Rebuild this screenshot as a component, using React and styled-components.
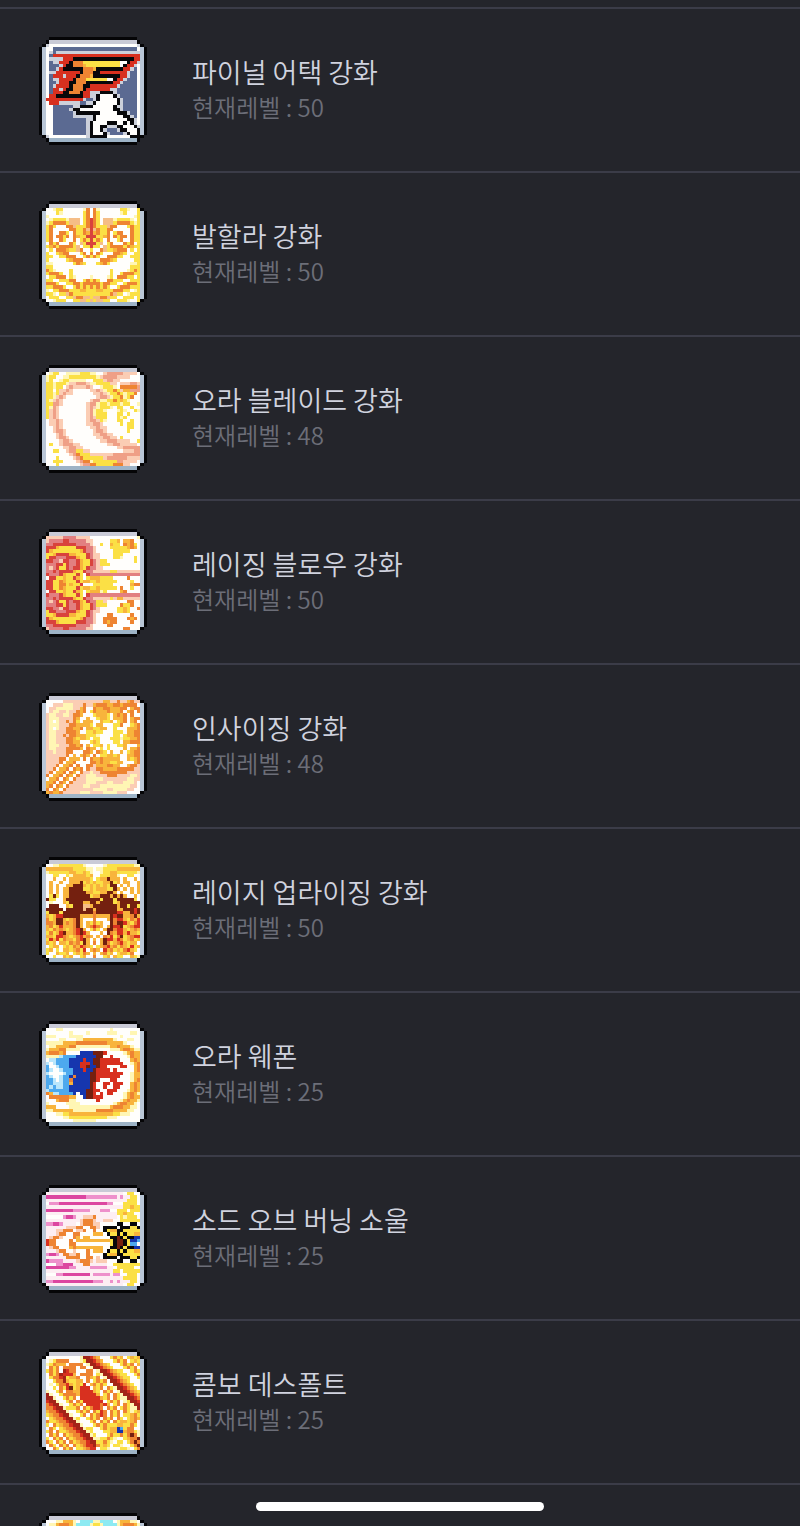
import styled, { createGlobalStyle } from 'styled-components';

const GlobalStyle = createGlobalStyle`
    * {
        box-sizing: border-box;
    }

    body {
        margin: 0;
        background-color: #24252b;
        font-family: "Noto Sans CJK KR", "Noto Sans", sans-serif;
    }
`

const Screen = styled.main`
    height: 100vh;
    overflow: hidden;
    padding-top: 7px;
`;

const SkillList = styled.ul`
    list-style: none;
    margin: 0;
    padding: 0;
`;

const SkillRow = styled.li`
    display: flex;
    align-items: center;
    gap: 45px;
    padding: 28px 39px 26px;
    border-top: 2px solid #3b3c48;
`;

const Icon = styled.svg`
    flex: none;
    width: 108px;
    height: 108px;
    shape-rendering: crispEdges;
`;

const SkillInfo = styled.div`
    min-width: 0;
    padding-bottom: 4px;
`;

const SkillName = styled.h2`
    margin: 0;
    color: #d0d3df;
    font-size: 27px;
    font-weight: 350;
    line-height: 36px;
`;

const SkillLevel = styled.p`
    margin: 0;
    color: #6c6e78;
    font-size: 24px;
    font-weight: 350;
    line-height: 34px;
`;

const HomeIndicator = styled.div`
    position: fixed;
    left: 50%;
    bottom: 15px;
    width: 36%;
    height: 9px;
    border-radius: 5px;
    background-color: #fff;
    transform: translateX(-50%);
`;

const PALETTE = {
    w: '#fffefc', k: '#08080a', s: '#5b6a92', g: '#ccd0da',
    r: '#d8301f', d: '#74200f', D: '#a32418', R: '#d9433c',
    o: '#ee8432', a: '#f8b43c', y: '#fbe045', l: '#fff6b4',
    n: '#f5bd86', p: '#fbcdb4', q: '#ef9f86', m: '#e27f80',
    b: '#4da9ee', B: '#1636ae', c: '#b9e6fb', C: '#8deaf2',
    M: '#dc46a0', P: '#ee90cb', f: '#fdeef3',
}

// 28x28 sprites, one letter per pixel
const finalAttack = [
    'gwwwwwwwwwwwwwwwwwwwwwwwwwwg',
    'wwsssssssssssssssssssssssssw',
    'wgsggggggggggggggggggggggggg',
    'wsrrrrrrrrrrrrrrrrrrrrrrrrrr',
    'wggggrrrkkkkkkkkkkkkkkkkkkrr',
    'wsggrrrkoooyyyyyyyyyyywwkrrg',
    'wsssgrkkoooayyyyyyyyyywkrrgw',
    'wssgrkkkkkkoooakkkkkkkkrrgsw',
    'wggrrrrrrrkoookkrrrrrrrrgssw',
    'wsrrrgrrrkoooakkkkkkkkrrgssw',
    'wsggrrrrkoooyyyyyywwkrrgsssw',
    'wssgrrrkkoookkkkkkkkrrgssssw',
    'wsgrrrrkoookkrrrrrrrrgsssssw',
    'wsrrgrkkoookrrrrrrrggssssssw',
    'wsrrrkkoookrrgggkkkkgssssssw',
    'wrrkkkkkkkkrrggkwwwwkgsssssw',
    'rrrrrrrrrrrgssgkwwwwwkgssssw',
    'wrrrggggggssggkwwwwwwkgssssw',
    'wwssssssggkkkkwwwwwwkggssssw',
    'wwsssssgkkwwwwwwwwwwkkgssssw',
    'wwssssssgkkkkkkkwwwwwkkkgssw',
    'wwssssssggggggkwwwwwwwwkkgsw',
    'wwssssssssssggkwwwwwwwwwkkgw',
    'wwssssssssssgkwwwwkkkwwkwkgw',
    'wwssssssssssgkwwkkgggkkwwwkg',
    'wwssssssssssgkwwkgsssgkkwwwk',
    'wwssssssssssgkwwwkgssssgkwwk',
    'gwwwwwwwwwwwgkkkkkwwwwwwwkkk',
]

// left half plus the centre column, mirrored below
const valhalla = [
    'wwlyywwwwwwlow', 'wwwylwwwwwwyow', 'lwwwwwwwwwwyow', 'wlyyyylnnnwyoR',
    'lyooooynnnwyoR', 'yoywwwoonyyyoR', 'yowwwwwooyyonR', 'yowwooywoyyoaR',
    'yowooyowoayyRR', 'yowwoywwowyoyR', 'woyowwwoywnyRR', 'yaoyooooynwyyR',
    'wywoooayynowwy', 'ywwyaoowwwyowo', 'yywwyyooowwyoy', 'ywwwwwyaooowww',
    'llwwwwwwyoayww', 'yywwwwwwwwwwww', 'oylwwwwywwwwww', 'yoooywwywwwwww',
    'wyyooowylwwwwl', 'yywwyyyoowwyoy', 'oooywwyyooyooo', 'yyoooywwyoyoyo',
    'lwyyoooyyyaayy', 'yylwyynoyyyyyy', 'wyyywwyynoonny', 'wwlyyywwyynnyn',
].map((half) => half + [...half.slice(0, 13)].reverse().join('') + 'y')

const auraBlade = [
    'wlyywwllllyyyllwwpqqqqqppppw',
    'lyywwllyyyyyyyylpqqqqppppwww',
    'lywwlyylllllwwyyypqqppwwwwww',
    'yylyyylppqqqpllyyyyppwpppqqp',
    'yylyywpqppppqpwwlyyylwoooooq',
    'yywyppqpwwwwwppqplyyoypaaqqq',
    'yylypqppwwwwwwppqplyyoylyyow',
    'yylpqpwwwwwwwwwpqqplyyolyoww',
    'ylpqpwwwwwwwwpqqllyyoyaylwww',
    'yyqqpwwwwwwwpqqlyylyyylyywwl',
    'ylqpwwwwwwwwpqplyyylwyywwyww',
    'ypqpwwwwwwwwpqlyylwwwlylwwyl',
    'ypqpwwwwwwwwpqlyyywwwyywywww',
    'ypqpwwwwwwwwpqpyyywwwylywwww',
    'wppqpwwwwwwwpqqpylwwwyywwyww',
    'wppqpwwwwwwwppqqpwwwwwywyyww',
    'wwpqpwwwwwwwwppqppwwwwwwyyww',
    'wwpqqpwwwwwwwwpqqpwwwwwwywww',
    'wwwpqpwwwwwwwwppqqppwwwwwwww',
    'wwwpqqpwwwwwwwwppqqppwywwwww',
    'wwwwpqqpwwwwwwwwppqqqppppwwy',
    'wywwpqqqppwwwwwwwwppqqpppppw',
    'wwwwwppqqppwwwwwwwwwwppqqqqq',
    'wwyywwpqqyyppwwwwwwwwwwpppqq',
    'wwwwwwwpqoyyypppppppqqqqqqqq',
    'wwwywwwwpqoyyyyyypqqqqqqpppp',
    'wwyyywwwwpqoolyyyyyyyqqppppw',
    'wwwywwwwwwpqqooyyyyyoooppwww',
]

const ragingBlow = [
    'pppppmmmmppppwwwwwwwwwwwwwwl',
    'pmmmmRRmmmmmppwwwwwyyawaaoww',
    'mmRRRRRRRmmmmpwwywwayywoaoyw',
    'RRRayyyyyRRRmmpwwwwyyyyyaoaw',
    'RayyyyyyyyaRmmpwwwwwyyyyywww',
    'yyaRRRRaayyyRmppwwwwyyywwwww',
    'yRRmmmRRRayyRmppwwwwyylwwwyw',
    'RRmmpRRmmRayyRmpyywwwwwwwwyw',
    'mmmRRyRmmRayyRmpyyywwwwwwwww',
    'mpmRyyRmRRayRmmppwwwwwwwwwww',
    'mmRmRRRRayyRmmpppppyyppppppp',
    'RmmmRayyyRywRmmmmmmmmmmmmmmm',
    'wRRyyayyRaywyaaayyyywwwwowww',
    'RRyyoayyyRyaayyayyyyywwwwyww',
    'RRyyooyayyRwwwyyyyyywwwwwaoo',
    'RRyyoayyyRyaayyayyyyywowwyww',
    'wRRyyayyRaywyaaalywwwwaowwww',
    'RmmmRayyyRywRmmmmmmmmmmmmmmm',
    'mmRmRRRRayyRmmpppppypaappppp',
    'mpmRyyRmRRayRmmyypwwwwwwooww',
    'mmmRRyRmmRayyRmyyywwwwoyyoww',
    'RRmmpRRmmRayyRmpwwwwwyyaywwo',
    'yRRmmmRRRayyRmppwwwwwyyaywww',
    'yyaRRRRaayyyRmpwwwoowwwwwoww',
    'RayyyyyyyyaRmmpwwoooowwwoaow',
    'RRRayyyyyRRRmmpwwoaoowwwwoww',
    'mmRRRRRRRmmmmpwwwwoowwwwwwww',
    'pmmmmRRmmmmmppwwwwwwwwwoowww',
]

const incising = [
    'wwwwwppppppppppppaappoppaopp',
    'wwppplllpppoppaoooaaooaoooow',
    'wpplllllppaowwoaaooaaaoowaoo',
    'wpllpplppoaowyoaaaoaaaowaowo',
    'pllppllpooawwwyaaaywaoaowoww',
    'plllppppoawwawwyaaywaaaowaoo',
    'plwlppopoywaaawwayyawyaowaow',
    'plllpppooaaaaywaawwwyyowwyao',
    'plwlppooaaowaayyaawwywwwaaao',
    'pllpppoooawwyyayywwwyyywaaoo',
    'pllppopooaaayyylwwwwyywyaaoo',
    'pllpppooayaaywyywwwyyylyyaao',
    'pllpppooaawwwyaywwwwyywaaooo',
    'plllpppooaowawyyawywwyyawwwa',
    'pllpppooooawoaawywywwwwawaao',
    'pplpppoowwwooawoaywawwawyaoo',
    'ppppppowawaoawowyyaayawwaaoo',
    'ppppoowaaawowoaaoaaaaawwayao',
    'ppppowaaowwwwooaoaayyaawwwao',
    'pppowaaowowwoopaaaooaawwaoop',
    'ppowaaowoaowoppooaaaaooooopp',
    'powaaowoawopplppoooooooopppp',
    'owaaowoawopplllpppoooppppllp',
    'waaowoawoppplllllpppppppllpp',
    'aaowoawopppplllpppllppplllpw',
    'aowoawoppppllppplllllllllppw',
    'owoawoppppppppllllppllllppww',
    'aoaaoppppplllppppllllpppwwww',
]

const rageUprising = [
    'wwllyyyyyyylwwwwwlyyyyyyyyll',
    'aaaaaaaayyyyllwllyyyyaaaaaaa',
    'lyyyyyyaayyaylwwlyyaayyyyyyl',
    'wwyywwylaaaayawwyyyaalwwyyww',
    'wwawwawaaaaaaywyaadaaawawwaw',
    'wawwawwaaadyayayyaadyawaawwa',
    'wawawwaadddayayayayddwawawwa',
    'wawawaaddddyyayaaayydawawawa',
    'wawawaadddddaayyaaddawawwawa',
    'wydywaaddddddyaadddadadawwaw',
    'dyywwaddddddddddydddydddddyw',
    'wlwwwayddddaaddaddddyadddddd',
    'wdddwwaydddnnadddddddaddyddy',
    'dddddwdddddnddaddddddaadddrd',
    'ydddydddddddddoddddddrraadrd',
    'ayarrdddddaaaaoaaaadrddaaoda',
    'oyaddayaodawwwowwwadorrayoar',
    'ooaddaoaodawayoyawwdoddrayor',
    'aoyaraaaodawaoroawadrrdyaorr',
    'ayoaoayaordawyoywaddorrayaoa',
    'yoyardaaordrawwwawdoarraraay',
    'aayrroayaoraoawawoaryodyaorr',
    'yraryoaayordawawadrraroyaoya',
    'ayawaayoaoydawowadoyaorayaaw',
    'wyaawyayoaroaywyaoraoyoayrya',
    'yawywaayaoyrwaoawraoyayorayw',
    'ywwayyawyayoawawaoyawyaayoww',
    'wwywwayawwyawwowwyawayywwayl',
]

const auraWeapon = [
    'wwwllwwwwwwwwwwwwwwlwwwwwwww',
    'wwwwwwwlwwwwlwwwwwlllwwwwllw',
    'lllwwwwllllwwwwwwwwwwwlwwwww',
    'wwwwllwwwllaaaaaaaaalwwwllww',
    'lllllaaaaoooooooooaaaaalwwww',
    'wllaaaaoollllllllllaaoaaalww',
    'laaaoollllwwwwwwwwwlllaooall',
    'aoooaowwwwBBBBdddrwwwwwlaoaa',
    'llllcbbbbBBBBBBddwwrwwwwloaa',
    'wccbbbbBBBBrBBddrrrrrrwwwaoa',
    'cwcbbbbBBBrrrBddrrrrrrrwwlao',
    'bwwcbbbBBBrrdBBdrrwwwwrrwwao',
    'bcwwcbbbBBBrBBdrrrrwrwwwwwao',
    'cwwwwcbbBBBBBddrrrrrrrrwwlaa',
    'bcwwcbbBoBBBBddrrrrrrrwwwlaa',
    'bbcwcbboBBBBBddrwwwrrwwwwlao',
    'bbcccbbaBBBBBdrwwrrwrrrwwaoa',
    'bcbccbbBBBBBBdrwwrwwrrwwwaoa',
    'cbbbbbbBBBBBddrrwwrrrwwwlaoa',
    'oaccbbbbBwBBddrwrwrrwwwlaoal',
    'wooooooaawwBddrrrwwwwwwlaoaa',
    'wwwaooollwwwwwwrwwwwwwlaoaal',
    'lwwwwwllllwwwwwwwwwwlaooaalw',
    'aaawwwwllllllllllllaoooaallw',
    'llaaaaaallllllloooooaaaallww',
    'wwwllyyaaaaaaaaaaaaayylllwww',
    'wwwwwllyyyyyyyyyyylllwwwwwww',
    'wwwwwwwwlllllllwwwwwwwwwwwww',
]

const burningSoul = [
    'fffffffffffffffffffffffwyyww',
    'MMMMMMMMMMMMPPPPPPPPPfPffyyw',
    'ffffffffffffffffffffffffyyyw',
    'wPPPMMMMMMMMMMMMMMPPwwwyyyyw',
    'fffffffffffffffffffffffyyayy',
    'MMMMMMMMPPPPPfffPPPwwyyywyyy',
    'fffffffffffffffffffffyyayyww',
    'wwwwwPMMPffpppoffffffwylyyyw',
    'ffffffffffpooopffpppwwyyyyyy',
    'PPMMPffffwpoooppwwwwwkkwwkkw',
    'ffffffpppoowwoopwkkkkwkkkyyk',
    'fffppooowppowwowwkyaakkyyyyy',
    'fffpoowwoowwwwaaawkyykykyyaa',
    'fpoopwwwoawaawwwwwwkkdkykkBB',
    'roowwwwowaaaaaaaaaaykddkyBBb',
    'roowwwwoowwwwwwwwwwykddkybbw',
    'fpoowwwaoaaaaaaaawwkkdkykkBB',
    'fffpoowwpwwwowaaawkyykykyyaa',
    'PMMPfooppowwowwwwkyaakkyyyyy',
    'ffffffoooowwoowpwkkkkwkkkyyk',
    'MPPPPffffpooopfpppwwwkkwwkkw',
    'wwwPPMMMfffoofffffwwyyyyyyyy',
    'MMMMMMMPPffffPPPPPffwyyyyyww',
    'ffffffffffffffffffffyywyyyyy',
    'wwwPPMMMMMMMMfPPPPPfPPwwyyyw',
    'fffffffffffffffffffffffyyyyw',
    'PPMMMMMMMMMMMMPPPffPfPfffyyw',
    'fffffffffffffffffffffffwyyww',
]

const comboDeathfault = [
    'wwwwwwwwwwlDDroawwwyoyawyaya',
    'wlyoooowwwlyDDroawwwyoyowyay',
    'lyoaaawoooowlDDroaywwwyoyowa',
    'woyowoooowoowlDDroaywwwyoyow',
    'yoyowDroowwwoowlDDroayywwyoy',
    'woyoDrrrawoooowylDDroayywwyo',
    'wyoorDyaaowwoayowlDDroayywwy',
    'wwyooDayyaawowyoyowDDroaywww',
    'wlwyoorayayrwaoyoywwDDroayww',
    'wwywoyrdyarrrwayowoylDDroayw',
    'lwwyowooaarrrraywoyowlDDroay',
    'DlwwyooooarrrrrawyowoylDDroa',
    'DDlwwyoyowrrrrrrayowoyllDDro',
    'rDDlwwyowoyrrrrrrwyoyowlyDDr',
    'orDDlwwyoyowrrrrorawyowoylDD',
    'oorDDlyyyowoyorrowoyowyoyllD',
    'aoorDDlwwyoyowoyrowoyowoylya',
    'yaoorDDlwwyowoyorowoyowyyaoy',
    'wyaoorDDlywwyoyowoyowoywyaoa',
    'oyyaoorDDlwwwyowoyowoyaayaow',
    'ywoyaoorDDlwwwyoyoyyyaayyoyw',
    'woywyaoorDDlyywwyoyaaBbyooww',
    'yowoyyaoorDDlywwwyyaaBBaooyl',
    'woyowoyaoorDDlywwwyoyyoyodol',
    'ywoyowoyaoorDDllyyoylwwyaood',
    'oywoyowoyaoorDDyyoylwyywyodo',
    'woywoyowoyaorrDoyaywyylwwyod',
    'wwoywoyowyyaorrwyylwwwyylwyo',
]

const swordIllusion = [
    'wwwllaaalwCCCCllCCCCwlaaallw',
    'wllaoooalCCCClyylCCCClaoooal',
    'wlaooaallCCllyaayllCClaaoaal',
    'llaoaallwwllyaooayllwwlaaoal',
]

const skills = [
    { name: '파이널 어택 강화', level: 50, sprite: finalAttack },
    { name: '발할라 강화', level: 50, sprite: valhalla },
    { name: '오라 블레이드 강화', level: 48, sprite: auraBlade },
    { name: '레이징 블로우 강화', level: 50, sprite: ragingBlow },
    { name: '인사이징 강화', level: 48, sprite: incising },
    { name: '레이지 업라이징 강화', level: 50, sprite: rageUprising },
    { name: '오라 웨폰', level: 25, sprite: auraWeapon },
    { name: '소드 오브 버닝 소울', level: 25, sprite: burningSoul },
    { name: '콤보 데스폴트', level: 25, sprite: comboDeathfault },
]

// neighbouring pixels of one colour become a single rect
const toRuns = (sprite) => {
    const runs = []
    sprite.forEach((line, y) => {
        let x = 0
        while (x < line.length) {
            let end = x + 1
            while (line[end] === line[x]) end++
            runs.push({ x, y, width: end - x, fill: PALETTE[line[x]] })
            x = end
        }
    })
    return runs
}

const SkillIcon = ({ sprite }) => (
    <Icon viewBox="0 0 32 32" aria-hidden="true">
        <path fill="#050507" d="M3 0h26v1h1v1h1v1h1v26h-1v1h-1v1h-1v1H3v-1H2v-1H1v-1H0V3h1V2h1V1h1z" />
        <path fill="#b9c6d6" d="M3 1h26v1h1v1h1v26h-1v1h-1v1H3v-1H2v-1H1V3h1V2h1z" />
        <path fill="#c9cad6" d="M3 1h26v1H3z" />
        <path fill="#9db3c6" d="M3 30h26v1H3z" />
        {toRuns(sprite).map((run) => (
            <rect
                key={`${run.x}-${run.y}`}
                x={run.x + 2}
                y={run.y + 2}
                width={run.width}
                height={1}
                fill={run.fill}
            />
        ))}
    </Icon>
)

const App = () => {
    return (
        <>
            <GlobalStyle />
            <Screen>
                <SkillList>
                    {skills.map((skill) => (
                        <SkillRow key={skill.name}>
                            <SkillIcon sprite={skill.sprite} />
                            <SkillInfo>
                                <SkillName>{skill.name}</SkillName>
                                <SkillLevel>현재레벨 : {skill.level}</SkillLevel>
                            </SkillInfo>
                        </SkillRow>
                    ))}
                    <SkillRow>
                        <SkillIcon sprite={swordIllusion} />
                    </SkillRow>
                </SkillList>
            </Screen>
            <HomeIndicator />
        </>
    );
}

export default App;
